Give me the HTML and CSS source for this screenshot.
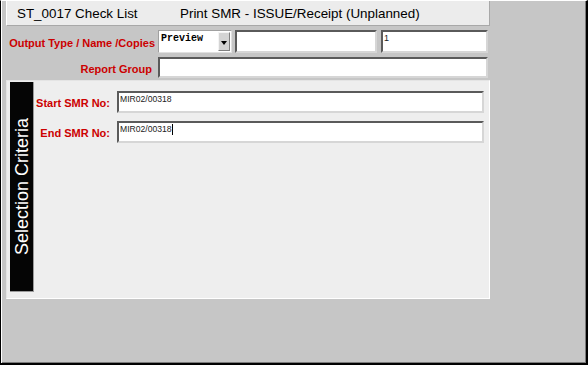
FILE: index.html
```html
<!DOCTYPE html>
<html>
<head>
<meta charset="utf-8">
<link rel="stylesheet" href="styles.css">
</head>
<body>
<div class="window">
  <div class="column">
    <div class="titlebar">
      <span class="title-id">ST_0017 Check List</span>
      <span class="title-name">Print SMR - ISSUE/Receipt (Unplanned)</span>
    </div>

    <div class="row row-output">
      <div class="label label-output">Output Type / Name /Copies</div>
      <div class="select">
        <span class="select-value">Preview</span>
        <span class="select-btn">
          <svg width="6" height="4" viewBox="0 0 6 4"><path d="M0 0H6L3 4Z" fill="#000"/></svg>
        </span>
      </div>
      <div class="field field-name"></div>
      <div class="field field-copies"><span class="val">1</span></div>
    </div>

    <div class="row row-group">
      <div class="label label-group">Report Group</div>
      <div class="field field-group"></div>
    </div>

    <div class="panel">
      <div class="sidebar"><span class="sidebar-text">Selection Criteria</span></div>
      <div class="criteria">
        <div class="crow">
          <div class="clabel">Start SMR No:</div>
          <div class="field cfield"><span class="val val-smr">MIR02/00318</span></div>
        </div>
        <div class="crow">
          <div class="clabel">End SMR No:</div>
          <div class="field cfield"><span class="val val-smr">MIR02/00318</span><span class="caret"></span></div>
        </div>
      </div>
    </div>
  </div>
</div>
</body>
</html>
```

FILE: styles.css
```css
html, body {
  margin: 0;
  padding: 0;
  background: #c6c6c6;
}

.window {
  width: 588px;
  height: 365px;
  box-sizing: border-box;
  background: #c6c6c6;
  border-top: 1px solid #ffffff;
  border-left: 1px solid #000000;
  border-right: 2px solid #000000;
  border-bottom: 2px solid #000000;
  box-shadow: inset 1px 0 0 #ffffff, inset -1px -1px 0 #7a7a7a;
  padding-left: 5px;
  font-family: "Liberation Sans", Arial, sans-serif;
}

.column {
  width: 484px;
  display: flex;
  flex-direction: column;
}

.titlebar {
  height: 24px;
  background: #ececec;
  border-bottom: 1px solid #a8a8a8;
  border-right: 1px solid #a8a8a8;
  border-left: 1px solid #ffffff;
  display: flex;
  align-items: center;
  font-size: 13.4px;
  color: #000;
}

.title-id {
  width: 163px;
  padding-left: 10px;
  flex: none;
}

.row {
  display: flex;
  align-items: center;
  margin-top: 4px;
}

.row-output { height: 23px; }
.row-group { height: 21px; }

.label {
  width: 152px;
  flex: none;
  box-sizing: border-box;
  text-align: right;
  color: #cc0000;
  font-weight: bold;
  font-size: 11px;
  padding-top: 2px;
  white-space: nowrap;
}

.label-output { padding-right: 3px; }
.label-group { padding-right: 6px; }

.field {
  box-sizing: border-box;
  height: 100%;
  background: #ffffff;
  border-top: 2px solid #5a5a5a;
  border-left: 2px solid #5a5a5a;
  border-right: 2px solid #d6d6d6;
  border-bottom: 2px solid #d6d6d6;
  flex: none;
  position: relative;
}

.field-name { width: 142px; margin-left: 3px; }
.field-copies { width: 107px; margin-left: 4px; }
.field-group { width: 330px; }

.val {
  display: block;
  font-family: "Liberation Sans", Arial, sans-serif;
  font-size: 9px;
  line-height: 10px;
  color: #222;
  padding: 1px 0 0 1px;
}

.select {
  width: 74px;
  height: 100%;
  box-sizing: border-box;
  flex: none;
  background: #ffffff;
  border: 1px solid #a0a0a0;
  border-right-color: #e0e0e0;
  border-bottom-color: #e0e0e0;
  display: flex;
}

.select-value {
  flex: 1;
  font-family: "Liberation Mono", "Courier New", monospace;
  font-weight: bold;
  font-size: 10px;
  line-height: 10px;
  padding: 3px 0 0 2px;
  color: #000;
}

.select-btn {
  width: 12px;
  margin: 1px 1px 1px 0;
  box-sizing: border-box;
  background: #d4d4d4;
  border: 1px solid #f4f4f4;
  border-right-color: #808080;
  border-bottom-color: #808080;
  display: flex;
  align-items: center;
  justify-content: center;
}

.select-btn svg { display: block; margin-top: 2px; }

.panel {
  margin-top: 2px;
  height: 219px;
  box-sizing: border-box;
  background: #eeeeee;
  border-right: 1px solid #ffffff;
  border-bottom: 1px solid #ffffff;
  border-left: 1px solid #e4e4e4;
  border-top: 1px solid #e4e4e4;
  padding: 1px 0 6px 3px;
  display: flex;
}

.sidebar {
  width: 24px;
  flex: none;
  background: #050505;
  border-right: 1px solid #9a9a9a;
  border-bottom: 1px solid #9a9a9a;
  box-sizing: border-box;
  display: flex;
  align-items: center;
  justify-content: center;
}

.sidebar-text {
  writing-mode: vertical-rl;
  transform: rotate(180deg);
  color: #ffffff;
  font-size: 18px;
  white-space: nowrap;
  line-height: 20px;
  padding-right: 1px;
}

.criteria {
  display: flex;
  flex-direction: column;
  gap: 8px;
  padding-top: 9px;
}

.crow {
  display: flex;
  align-items: center;
  height: 22px;
}

.clabel {
  width: 76px;
  flex: none;
  text-align: right;
  color: #cc0000;
  font-weight: bold;
  font-size: 11px;
  padding-top: 2px;
  white-space: nowrap;
}

.cfield {
  width: 367px;
  margin-left: 7px;
  display: flex;
  align-items: flex-start;
}

.val-smr {
  font-size: 8.6px;
  padding-top: 1px;
}

.caret {
  display: block;
  width: 1px;
  height: 11px;
  margin-top: 1px;
  background: #000;
}
```
